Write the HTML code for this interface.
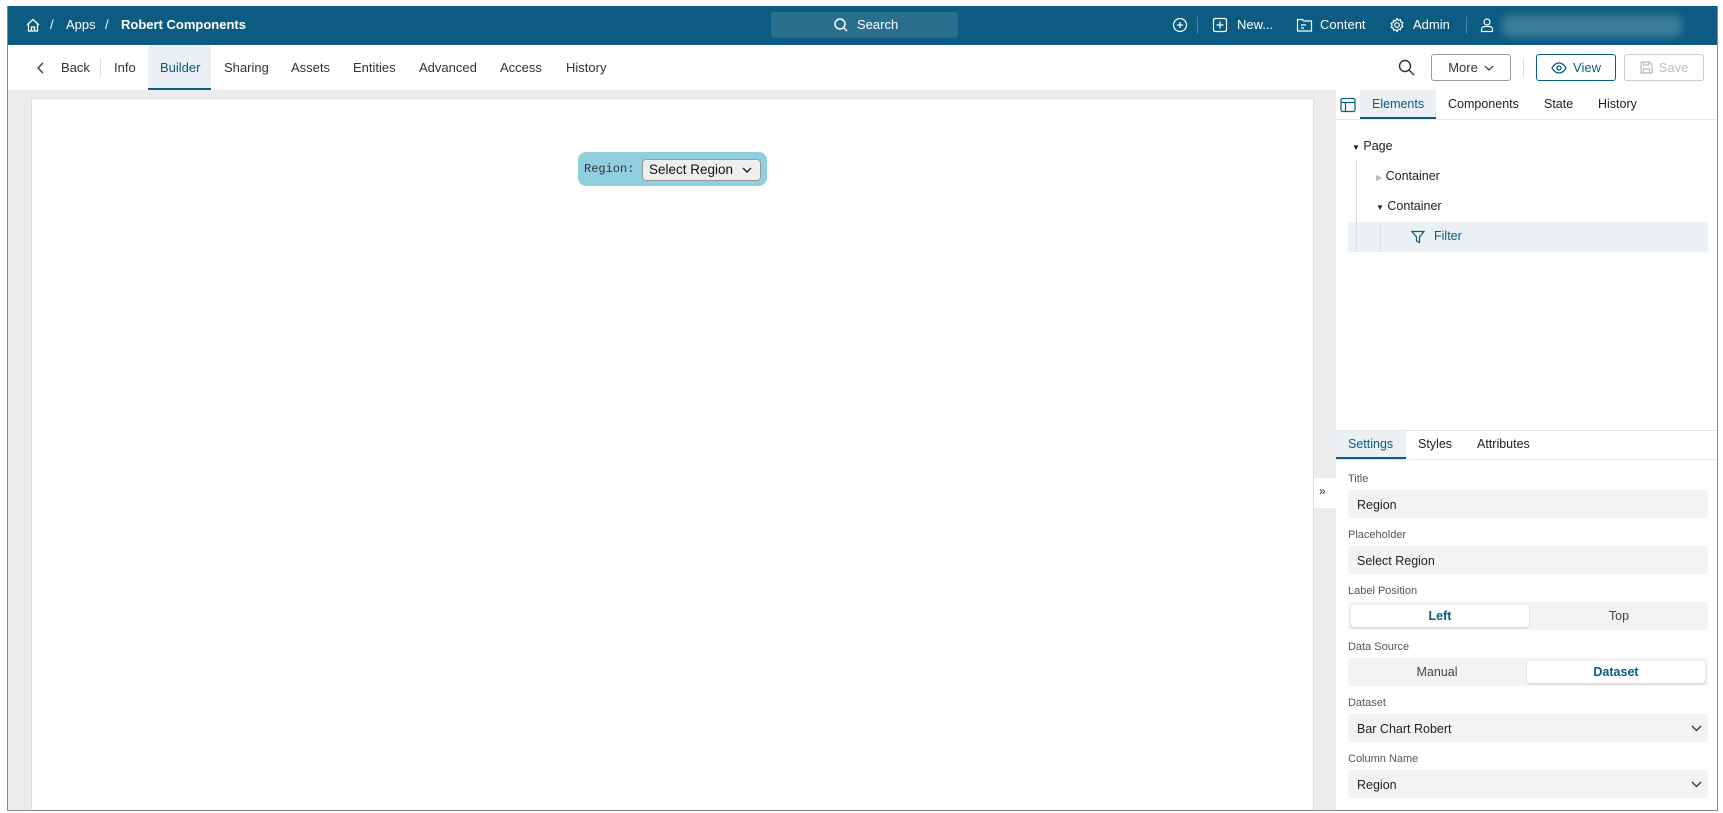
<!DOCTYPE html>
<html><head><meta charset="utf-8"><style>
*{box-sizing:border-box;margin:0;padding:0}
body{width:1723px;height:813px;background:#fff;font-family:"Liberation Sans",sans-serif;position:relative;overflow:hidden;color:#222}
.abs{position:absolute}
.frame{position:absolute;left:7px;top:6px;width:1711px;height:805px;border:1px solid #888;border-top:none;overflow:hidden;background:#ececec}
.hdr{position:absolute;left:0;top:0;width:100%;height:39px;background:#0b5c80;color:#fff;font-size:13px}
.hdr span{position:absolute;top:11px}
.tabs{position:absolute;left:0;top:39px;width:100%;height:45px;background:#fff;font-size:13px;color:#333}
.tabs span{position:absolute;top:15px}
.btn{position:absolute;top:9px;height:27px;border:1px solid #999;border-radius:3px;font-size:13px;display:flex;align-items:center;justify-content:center;gap:6px}
.lbl{position:absolute;left:1340px;font-size:11px;color:#555}
.inp{position:absolute;left:1340px;width:360px;height:28px;background:#f3f3f3;border-radius:4px;font-size:12.5px;padding:8px 0 0 9px;color:#222}
</style></head><body>
<div class="frame">
 <div class="hdr">
  <svg class="abs" style="left:17px;top:11px" width="16" height="16" viewBox="0 0 16 16" fill="none" stroke="#fff" stroke-width="1.3"><path d="M2 8 8 2.5 14 8M3.5 7v7h9V7M6.5 14v-4h3v4"/></svg>
  <span style="left:42px">/</span><span style="left:58px">Apps</span><span style="left:97px">/</span>
  <span style="left:113px;font-weight:bold">Robert Components</span>
  <div class="abs" style="left:763px;top:6px;width:187px;height:26px;background:#2b6f8f;border-radius:3px"></div>
  <svg class="abs" style="left:825px;top:11px" width="16" height="16" viewBox="0 0 16 16" fill="none" stroke="#fff" stroke-width="1.4"><circle cx="7" cy="7" r="5"/><path d="M10.5 10.5 14 14"/></svg>
  <span style="left:849px">Search</span>
  <svg class="abs" style="left:1164px;top:11px" width="16" height="16" viewBox="0 0 16 16" fill="none" stroke="#fff" stroke-width="1.2"><circle cx="8" cy="8" r="6.5"/><path d="M8 5v6M5 8h6"/></svg>
  <div class="abs" style="left:1189px;top:11px;width:1px;height:17px;background:#4d88a3"></div>
  <svg class="abs" style="left:1204px;top:11px" width="16" height="16" viewBox="0 0 16 16" fill="none" stroke="#fff" stroke-width="1.2"><rect x="1.5" y="1.5" width="13" height="13" rx="1.5"/><path d="M8 4.5v7M4.5 8h7"/></svg>
  <span style="left:1229px">New...</span>
  <svg class="abs" style="left:1288px;top:11px" width="17" height="16" viewBox="0 0 17 16" fill="none" stroke="#fff" stroke-width="1.2"><path d="M1.5 2.5h5l1.5 1.5h7.5v10h-14z M5 8h5M5 11h3"/></svg>
  <span style="left:1312px">Content</span>
  <svg class="abs" style="left:1381px;top:11px" width="16" height="16" viewBox="0 0 16 16" fill="none" stroke="#fff" stroke-width="1.2"><circle cx="8" cy="8" r="2.3"/><path d="M8 1.5l1.3 1.7 2.1-.5.4 2.1 2 .9-.9 2 .9 2-2 .9-.4 2.1-2.1-.5L8 14.5l-1.3-1.7-2.1.5-.4-2.1-2-.9.9-2-.9-2 2-.9.4-2.1 2.1.5z"/></svg>
  <span style="left:1405px">Admin</span>
  <div class="abs" style="left:1458px;top:11px;width:1px;height:17px;background:#4d88a3"></div>
  <svg class="abs" style="left:1471px;top:11px" width="16" height="16" viewBox="0 0 16 16" fill="none" stroke="#fff" stroke-width="1.2"><circle cx="8" cy="5" r="3"/><path d="M2.5 14.5v-2a3 3 0 0 1 3-3h5a3 3 0 0 1 3 3v2z"/></svg>
  <div class="abs" style="left:1494px;top:9px;width:180px;height:22px;background:#3d7d9a;border-radius:8px;filter:blur(4px)"></div>
 </div>
 <div class="tabs">
  <svg class="abs" style="left:28px;top:17px" width="10" height="12" viewBox="0 0 10 12" fill="none" stroke="#333" stroke-width="1.3"><path d="M7 1 2 6l5 5"/></svg>
  <span style="left:53px">Back</span>
  <div class="abs" style="left:92px;top:13px;width:1px;height:18px;background:#ddd"></div>
  <span style="left:106px">Info</span>
  <div class="abs" style="left:140px;top:0;width:63px;height:45px;background:#ebf0f4;border-bottom:2px solid #0b5c80"></div>
  <span style="left:152px;color:#0b5c80">Builder</span>
  <span style="left:216px">Sharing</span><span style="left:283px">Assets</span><span style="left:345px">Entities</span>
  <span style="left:411px">Advanced</span><span style="left:492px">Access</span><span style="left:558px">History</span>
  <svg class="abs" style="left:1390px;top:14px" width="17" height="17" viewBox="0 0 17 17" fill="none" stroke="#333" stroke-width="1.4"><circle cx="7" cy="7" r="5.5"/><path d="M11 11l5 5"/></svg>
  <div class="btn" style="left:1423px;width:80px;color:#333">More <svg width="10" height="6" viewBox="0 0 10 6" fill="none" stroke="#333" stroke-width="1.2"><path d="M1 1l4 4 4-4"/></svg></div>
  <div class="abs" style="left:1515px;top:14px;width:1px;height:18px;background:#ddd"></div>
  <div class="btn" style="left:1528px;width:80px;border-color:#0b5c80;color:#0b5c80"><svg width="16" height="12" viewBox="0 0 16 12" fill="none" stroke="#0b5c80" stroke-width="1.3"><path d="M1 6s2.5-5 7-5 7 5 7 5-2.5 5-7 5-7-5-7-5z"/><circle cx="8" cy="6" r="2"/></svg>View</div>
  <div class="btn" style="left:1616px;width:80px;border-color:#ccc;color:#bbb"><svg width="13" height="13" viewBox="0 0 13 13" fill="none" stroke="#bbb" stroke-width="1.2"><path d="M1 1h8.5L12 3.5V12H1z M3.5 1v3h5V1 M3.5 12V8h6v4"/></svg>Save</div>
 </div>
 <div class="abs" style="left:23px;top:92px;width:1283px;height:720px;background:#fff;border:1px solid #ddd"></div>
 <div class="abs" style="left:570px;top:146px;width:189px;height:34px;background:#91cfdf;border-radius:8px"></div>
 <div class="abs" style="left:576px;top:156px;font-family:'Liberation Mono',monospace;font-size:12px;color:#333">Region:</div>
 <div class="abs" style="left:634px;top:153px;width:119px;height:22px;background:#eee;border:1px solid #999;border-radius:4px;font-size:13.5px;padding:2px 0 0 6px;color:#111">Select Region</div>
 <svg class="abs" style="left:734px;top:161px" width="10" height="6" viewBox="0 0 10 6" fill="none" stroke="#222" stroke-width="1.4"><path d="M1 1l4 4 4-4"/></svg>
 <div class="abs" style="left:1328px;top:84px;width:383px;height:721px;background:#fff"></div>
 <div class="abs" style="left:1306px;top:472px;width:22px;height:30px;background:#fff;font-size:12px;padding:6px 0 0 5px;color:#333">&raquo;</div>
 <svg class="abs" style="left:1332px;top:91px" width="16" height="16" viewBox="0 0 16 16" fill="none" stroke="#0b5c80" stroke-width="1.2"><rect x="1" y="1.5" width="14" height="13" rx="1.5"/><path d="M1 5.5h14M5.5 5.5v9"/></svg>
 <div class="abs" style="left:1352px;top:84px;width:76px;height:29px;background:#ebf0f4;border-bottom:2px solid #0b5c80"></div>
 <div class="abs" style="left:1364px;top:91px;font-size:12.5px;color:#0b5c80">Elements</div>
 <div class="abs" style="left:1440px;top:91px;font-size:12.5px">Components</div>
 <div class="abs" style="left:1536px;top:91px;font-size:12.5px">State</div>
 <div class="abs" style="left:1590px;top:91px;font-size:12.5px">History</div>
 <div class="abs" style="left:1328px;top:113px;width:380px;height:1px;background:#e6e6e6"></div>
 <div class="abs" style="left:1344px;top:133px;font-size:12.5px"><span style="font-size:8px">▼</span> Page</div>
 <div class="abs" style="left:1348px;top:155px;width:1px;height:91px;background:#ddd"></div>
 <div class="abs" style="left:1368px;top:163px;font-size:12.5px"><span style="font-size:8px;color:#bbb">▶</span> Container</div>
 <div class="abs" style="left:1368px;top:193px;font-size:12.5px"><span style="font-size:8px">▼</span> Container</div>
 <div class="abs" style="left:1340px;top:216px;width:360px;height:30px;background:#ebf0f4;border-radius:3px"></div>
 <div class="abs" style="left:1372px;top:216px;width:1px;height:30px;background:#ddd"></div>
 <div class="abs" style="left:1348px;top:216px;width:1px;height:30px;background:#ddd"></div>
 <svg class="abs" style="left:1403px;top:224px" width="14" height="14" viewBox="0 0 14 14" fill="none" stroke="#0b5c80" stroke-width="1.2"><path d="M1 1.5h12L8.5 7v5.5L5.5 11V7z"/></svg>
 <div class="abs" style="left:1426px;top:223px;font-size:12.5px;color:#0b5c80">Filter</div>
 <div class="abs" style="left:1328px;top:424px;width:380px;height:1px;background:#e6e6e6"></div>
 <div class="abs" style="left:1328px;top:425px;width:70px;height:28px;background:#ebf0f4;border-bottom:2px solid #0b5c80"></div>
 <div class="abs" style="left:1340px;top:431px;font-size:12.5px;color:#0b5c80">Settings</div>
 <div class="abs" style="left:1410px;top:431px;font-size:12.5px">Styles</div>
 <div class="abs" style="left:1469px;top:431px;font-size:12.5px">Attributes</div>
 <div class="abs" style="left:1328px;top:453px;width:380px;height:1px;background:#e6e6e6"></div>
 <div class="lbl" style="top:467px">Title</div>
 <div class="inp" style="top:484px">Region</div>
 <div class="lbl" style="top:523px">Placeholder</div>
 <div class="inp" style="top:540px">Select Region</div>
 <div class="lbl" style="top:579px">Label Position</div>
 <div class="inp" style="top:596px;padding:0"></div>
 <div class="abs" style="left:1343px;top:599px;width:178px;height:22px;background:#fff;border-radius:3px;box-shadow:0 1px 2px #ccc;text-align:center;font-size:12.5px;font-weight:bold;color:#0b5c80;padding-top:4px">Left</div>
 <div class="abs" style="left:1522px;top:603px;width:178px;text-align:center;font-size:12.5px;color:#444">Top</div>
 <div class="lbl" style="top:635px">Data Source</div>
 <div class="inp" style="top:652px;padding:0"></div>
 <div class="abs" style="left:1340px;top:659px;width:178px;text-align:center;font-size:12.5px;color:#444">Manual</div>
 <div class="abs" style="left:1519px;top:655px;width:178px;height:22px;background:#fff;border-radius:3px;box-shadow:0 1px 2px #ccc;text-align:center;font-size:12.5px;font-weight:bold;color:#0b5c80;padding-top:4px">Dataset</div>
 <div class="lbl" style="top:691px">Dataset</div>
 <div class="inp" style="top:708px">Bar Chart Robert</div>
 <svg class="abs" style="left:1683px;top:719px" width="11" height="7" viewBox="0 0 11 7" fill="none" stroke="#333" stroke-width="1.3"><path d="M1 1l4.5 4.5L10 1"/></svg>
 <div class="lbl" style="top:747px">Column Name</div>
 <div class="inp" style="top:764px">Region</div>
 <svg class="abs" style="left:1683px;top:775px" width="11" height="7" viewBox="0 0 11 7" fill="none" stroke="#333" stroke-width="1.3"><path d="M1 1l4.5 4.5L10 1"/></svg>
</div>
</body></html>
